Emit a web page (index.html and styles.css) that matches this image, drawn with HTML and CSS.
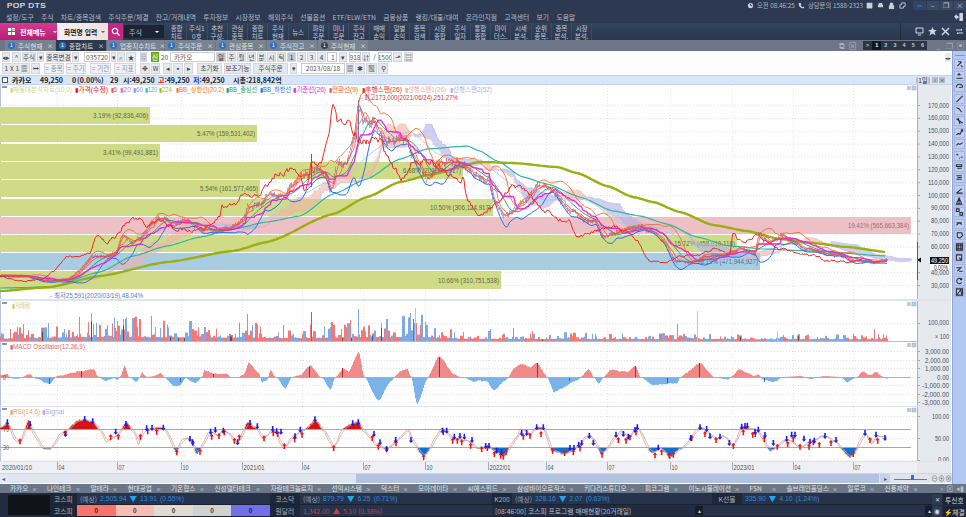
FILE: index.html
```html
<!DOCTYPE html>
<html lang="ko">
<head>
<meta charset="utf-8">
<title>POP DTS</title>
<link rel="stylesheet" href="styles.css">
</head>
<body>
<div class="app">
  <header class="titlebar">
    <div class="logo">POP DTS</div>
    <div class="title-right">
      <svg class="ico" viewBox="0 0 8 8"><circle cx="4" cy="4" r="3" fill="#c8d0dc"/><path d="M4 2v2h2" stroke="#2d3a50" fill="none"/></svg>
      <span class="clock">오전 08:46:25</span>
      <svg class="ico" viewBox="0 0 8 8"><path d="M1 1l2 0 1 2-1 1 2 2 1-1 1 1v1c-4 1-7-3-6-6z" fill="#c8d0dc"/></svg>
      <span class="phone">상담문의 1588-2323</span>
      <svg class="ico" viewBox="0 0 8 8"><path d="M1 1h6v6H1zM1 3h6M1 5h6" stroke="#c8d0dc" fill="#c8d0dc" stroke-width=".5"/></svg>
      <svg class="ico" viewBox="0 0 8 8"><path d="M2 1h4v2h1v3H1V3h1z" fill="#c8d0dc"/></svg>
      <svg class="ico" viewBox="0 0 8 8"><path d="M2 4V2.500a2 2 0 0 1 4 0V4h1v4H1V4z" fill="#c8d0dc"/></svg>
      <svg class="ico" viewBox="0 0 8 8"><path d="M3 1h4v4H5v2H1V3h2z" fill="none" stroke="#c8d0dc"/></svg>
      <div class="winbtns">
        <span class="winbtn blue">&lt;&gt;</span><span class="winbtn">–</span><span class="winbtn">❐</span><span class="winbtn">×</span>
      </div>
    </div>
  </header>
  <nav class="menubar">
    <span>설정/도구</span><span>주식</span><span>차트/종목검색</span><span>주식주문/체결</span><span>잔고/거래내역</span><span>투자정보</span><span>시장정보</span><span>해외주식</span><span>선물옵션</span><span>ETF/ELW/ETN</span><span>금융상품</span><span>랭킹/대출/대여</span><span>온라인지점</span><span>고객센터</span><span>보기</span><span>도움말</span>
    <svg class="menu-exit" viewBox="0 0 10 9"><path d="M6 0h4v9H6zM0 4l3-3v2h2v3H3v2z" fill="#d0d6e0"/></svg>
  </nav>
  <section class="toolbar">
    <div class="all-menu">
      <svg class="ico" viewBox="0 0 9 9"><path d="M0 0h4v4H0zM5 0h4v2H5zM5 3h4v1H5zM0 5h4v4H0zM5 5h4v4H5z" fill="#fff"/></svg>
      <b>전체메뉴</b><i class="caret-w"></i>
    </div>
    <div class="screen-input"><b>화면명 입력</b><i class="caret-r"></i></div>
    <div class="search-btn"><svg viewBox="0 0 9 9"><circle cx="4" cy="4" r="2.700" fill="none" stroke="#fff" stroke-width="1.200"/><path d="M6 6l2.500 2.500" stroke="#fff" stroke-width="1.300"/></svg></div>
    <div class="market-combo"><span>주식</span><i class="caret-w"></i></div>
    <div class="quick">
      <span>종합<br>차트</span><span>주식1<br>0호</span><span>추천<br>구성.</span><span>관심<br>종목</span><span>종합<br>차트</span><span>주식<br>현재</span><span>뉴스</span><span>파워<br>주문</span><span>미니<br>주문</span><span>주식<br>잔고</span><span>매매<br>손익</span><span>일별<br>손익</span><span>종목<br>검색</span><span>시장<br>종합</span><span>주식<br>일자</span><span>통합<br>종합</span><span>마이<br>더스.</span><span>시세<br>분석.</span><span>순위<br>종목.</span><span>종목<br>분석.</span><span>시장<br>분석.</span>
    </div>
    <div class="tool-right">
      <svg class="ico9" viewBox="0 0 9 9"><path d="M1 1h7v5H1zM3 8h3" fill="none" stroke="#cfd6e2"/></svg>
      <svg class="ico9" viewBox="0 0 9 9"><path d="M4.500 0l1.300 3h3L6.500 5l1 3.500-3-2-3 2 1-3.500L0 3h3.200z" fill="#cfd6e2"/></svg>
      <svg class="ico9" viewBox="0 0 9 9"><path d="M1 1l7 7M8 1L1 8" stroke="#cfd6e2" stroke-width="1.500"/></svg>
      <svg class="ico9 last" viewBox="0 0 9 9"><path d="M1 3h6l-1-1M8 6H2l1 1" fill="none" stroke="#cfd6e2"/></svg>
    </div>
  </section>
  <section class="tabs">
    <div class="tab"><i class="dot">1</i><span>주식현재</span><em>×</em></div>
    <div class="tab active"><i class="dot">1</i><span>종합차트</span><em>×</em></div>
    <div class="tab wide"><i class="dot">1</i><span>업종지수차트</span><em>×</em></div>
    <div class="tab"><i class="dot">1</i><span>주식주문</span><em>×</em></div>
    <div class="tab"><i class="dot">1</i><span>관심종목</span><em>×</em></div>
    <div class="tab"><i class="dot">1</i><span>주식잔고</span><em>×</em></div>
    <div class="tab"><i class="dot dark">1</i><span>주식현재</span><em>×</em></div>
    <div class="tabs-right">
      <span class="tab-ic">⧉</span><span class="tab-ic">⊠</span>
      <div class="pager"><b>&gt;</b><b class="cur">1</b><b>2</b><b>3</b><b>4</b><b>5</b><b>6</b></div>
      <span class="tab-ic">_</span><span class="tab-ic">❐</span><span class="tab-ic">▣</span>
    </div>
  </section>
  <div class="workspace">
    <div class="chart-col">
      <div class="row row1">
        <span class="c w8">◂▸</span><span class="c w9 ml1">^</span><span class="c w14">주식</span><span class="c w7">▾</span><span class="c w25 ml1">종목변경</span><span class="c w7">▾</span><span class="f w26 ml4">035720</span><span class="c w5">▾</span><span class="c w8">⌕</span><span class="c w10">★</span><span class="c w7 ml3 mute">뮤</span><span class="c w8 ml3 green">신</span><span class="p w5 ml2">20</span><span class="f w45 ml2 left">카카오</span><span class="c w10 dark">일</span><span class="c w9">주</span><span class="c w9">월</span><span class="c w9">년</span><span class="c w9">분</span><span class="c w9">시</span><span class="c w9">틱</span><span class="c w9 dark">1</span><span class="c w9">2</span><span class="c w9">3</span><span class="c w9">4</span><span class="f w10 left">1</span><span class="c w8 ml1">▾</span><span class="f w12 ml1">918</span><span class="c w8">⇵</span><span class="p w3 ml2">/</span><span class="f w14 ml1">1500</span><span class="c w9">⬏</span><span class="c w9 ml1">▤</span>
        <span class="collapse">◂▸</span>
      </div>
      <div class="row row2">
        <span class="c w28">1 X 1 ▦</span><span class="c w9">↦</span><span class="c w20 ml3 soft">= 종목</span><span class="c w20 ml1 soft">= 주기</span><span class="c w21 ml3 soft">= 기간</span><span class="c w22 ml2 soft">= 지표</span><span class="c w10 ml3">✥</span><span class="c w9">W</span><span class="c w9 ml2">◂</span><span class="c w10">▪</span><span class="c w9">▸</span><span class="c w25 ml3">초기화</span><span class="c w27 ml1">보조기능</span><span class="c w35 ml1">주식주문</span><span class="c w7 ml1">▾</span><span class="f w44 ml3">2023/08/18</span><span class="c w8">▦</span><span class="c w10">✱</span><span class="c w11">▧</span><span class="c w10">⚲</span>
      </div>
      <div class="infobar">
        <span class="check"></span>
        <b class="name">카카오</b><b class="n1">49,250</b><b class="n2">0</b><b class="n3">(0.00%)</b><b class="n4">29</b>
        <b class="n5">시:49,250</b><b class="n6"><u class="red">고</u>:49,250</b><b class="n7"><u class="blue">저</u>:49,250</b><b class="n8">시총:218,842억</b>
        <span class="info-btns"><span class="bx">[1일]</span><span class="bk">▫</span><span class="bk">×</span></span>
      </div>
      <div class="panes">
        <svg id="pane-price" class="pane price" width="951" height="216" viewBox="0 86 951 216"></svg>
        <svg id="pane-vol" class="pane vol" width="951" height="41" viewBox="0 302 951 41"></svg>
        <svg id="pane-macd" class="pane macd" width="951" height="65" viewBox="0 343 951 65"></svg>
        <svg id="pane-rsi" class="pane rsi" width="951" height="55" viewBox="0 408 951 55"></svg>
        <svg id="pane-time" class="pane time" width="951" height="11" viewBox="0 463 951 11"></svg>
      </div>
      <div class="scrollbar">
        <span class="sb-arrow">◂</span><span class="sb-gap"></span><span class="sb-thumb"></span>
        <span class="sb-end">▸</span>
        <span class="sb-slider"><i></i></span>
        <span class="sb-zoom">⊖</span><span class="sb-zoom">⊕</span><span class="sb-zoom">⊗</span>
      </div>
    </div>
    <aside class="rail" id="rail"></aside>
  </div>
  <section class="stocks">
    <span class="s3">카카오</span><span class="s4">나인테크</span><span class="s3">알테라</span><span class="s4">현대공업</span><span class="s4">기온협스</span><span class="s6">신성델타테크</span><span class="s7">자람테크놀로지</span><span class="s5">선익시스템</span><span class="s3">덕스터</span><span class="s5">모아데이타</span><span class="s5">씨에스윈드</span><span class="s8">삼성바이오로직스</span><span class="s7">키다리스튜디오</span><span class="s4">피코그램</span><span class="s7">이노시뮬레이션</span><span class="s3">FSN</span><span class="s7">솔브레인홀딩스</span><span class="s3">알루코</span><span class="s4">신풍제약</span>
    <div class="stocks-right"><span>»</span><span>⊠</span><span>◂▮</span></div>
  </section>
  <footer class="status">
    <div class="blackbox"></div>
    <div class="status-rows">
      <div class="srow">
        <span class="lbl l27">코스피</span>
        <span class="val v193">(예상) <q>2,505.94</q> <a>▼</a> <q>13.91</q> <q>(0.55%)</q></span>
        <span class="lbl l30">코스닥</span>
        <span class="val v192">(예상) <q>879.79</q> <a>▼</a> <q>6.25</q> <q>(0.71%)</q></span>
        <span class="lbl l20">K200</span>
        <span class="val v200">(예상) <q>328.16</q> <a>▼</a> <q>2.07</q> <q>(0.63%)</q></span>
        <span class="lbl l30">K선물</span>
        <span class="val grow"><q>335.90</q> <a>▼</a> <q>4.10</q> <q>(1.24%)</q></span>
      </div>
      <div class="srow">
        <span class="lbl l27">코스피</span>
        <div class="cells"><span class="c1">0</span><span class="c2">0</span><span class="c3">0</span><span class="c4">0</span><span class="c5">0</span></div>
        <span class="lbl l30">원달러</span>
        <span class="val v192 up">1,342.00 <a>▲</a> 5.10 (0.38%)</span>
        <span class="val v214 prog">[08:46:00] 코스피 프로그램 매매현황(20거래일)</span>
        <span class="mini">▴</span>
        <span class="val grow"></span>
        <span class="mini">▴</span>
      </div>
    </div>
    <div class="status-btns">
      <span class="sq">✕</span><span class="sbtn">투신호</span>
      <span class="sq">◉</span><span class="sbtn">⚡체결</span>
    </div>
  </footer>
</div>
<script src="chart.js"></script>
</body>
</html>
```
FILE: styles.css
```css
*{box-sizing:border-box}
html,body{margin:0;padding:0;overflow:hidden;background:#fff}
body{font:6.6px "Noto Sans CJK KR","Liberation Sans",sans-serif;color:#333}
.app{width:966px;height:517px;display:flex;flex-direction:column;overflow:hidden}

.titlebar{height:11px;background:#2c3950;display:flex;align-items:center;justify-content:space-between;padding-left:7px;color:#c8d0dc;overflow:hidden}
.logo{font:normal 8px "Liberation Sans",sans-serif;color:#e8ecf2;letter-spacing:.6px;-webkit-text-stroke:.2px #e8ecf2;line-height:11px}
.title-right{display:flex;align-items:center;height:11px;white-space:nowrap}
.ico{width:7px;height:7px;margin-right:3px;flex:none}
.clock{width:41px;flex:none;color:#aeb8c8;line-height:11px;font-size:6.300px}
.phone{width:58px;flex:none;color:#aeb8c8;line-height:11px;font-size:6.300px}
.title-right .ico:nth-of-type(n+3){margin-right:4px;width:7px}
.winbtns{display:flex;margin-left:2px}
.winbtn{width:13.500px;height:9px;line-height:9px;text-align:center;background:#3a4a64;color:#c8d0dc;font-size:7px;border-left:1px solid #2c3950;overflow:hidden}
.winbtn.blue{background:#2f4466;color:#7f93b3;font-size:5px}

.menubar{height:12px;background:#2c3950;display:flex;align-items:center;gap:7.300px;padding-left:6px;color:#b3bccb;position:relative}
.menubar span{white-space:nowrap;font-size:6.800px;line-height:11px}
.menu-exit{width:9px;height:8px;margin-left:auto;margin-right:3px}

.toolbar{height:17px;background:linear-gradient(#33435c,#2a374e);display:flex;align-items:stretch}
.all-menu{width:57px;background:linear-gradient(#d73a90,#b51f74);color:#fff;display:flex;align-items:center;padding-left:8px;gap:2px;font-size:7px;white-space:nowrap;flex:none}
.caret-w{width:0;height:0;border:2px solid transparent;border-top:2px solid #fff;margin:2px 0 0 5px;flex:none}
.caret-r{width:0;height:0;border:2px solid transparent;border-top:2px solid #c02a80;margin-top:2px;flex:none}
.screen-input{width:51px;background:linear-gradient(90deg,#fbeef2,#ece2da);color:#222;display:flex;align-items:center;justify-content:space-between;padding:0 3px 0 7px;font-size:6.800px;white-space:nowrap;flex:none}
.search-btn{width:15px;background:#c4277f;display:flex;align-items:center;justify-content:center;flex:none}
.search-btn svg{width:9px;height:9px}
.market-combo{width:40px;margin:2px 3px 2px 1px;background:#1c2433;color:#b9c2d0;display:flex;align-items:center;justify-content:space-between;padding:0 5px;font-size:7px;flex:none}
.quick{display:grid;grid-template-columns:repeat(21,20.250px);color:#c3cad6;line-height:8px;text-align:center;font-size:6.500px}
.quick span{display:flex;align-items:center;justify-content:center;border-right:1px solid #3c4b64;white-space:nowrap}
.tool-right{margin-left:auto;width:66px;display:flex;align-items:center;justify-content:flex-end;gap:4px;border-left:1px solid #1f2a3c;padding-right:2px}
.ico9{width:9px;height:9px}
.ico9.last{margin-left:1px}

.tabs{height:11px;background:#6c7686;display:flex;align-items:stretch;padding-left:5px;gap:1px;color:#dfe3ea}
.tab{width:50px;display:flex;align-items:center;background:#79838f;padding:0 2px 0 3px;gap:3px;white-space:nowrap}
.tab.active{background:#2c394e}
.tab.wide{width:57px}
.tab span{flex:1}
.tab em{font-style:normal;font-size:6px;color:#e6e9ee}
.dot{width:7px;height:7px;border-radius:50%;background:#2c6fc9;color:#fff;font:normal 5px/7px "Liberation Sans",sans-serif;text-align:center;flex:none}
.dot.dark{background:#3a3f48}
.tabs-right{margin-left:auto;display:flex;align-items:center;gap:2px;padding-right:1px;color:#a8b0bc}
.tab-ic{width:9px;text-align:center;font-size:8px;line-height:9px;overflow:hidden}
.pager{display:flex;background:#2c3544;height:9px;margin:0 5px 0 4px;width:64px;justify-content:space-around;font:bold 5.500px/9px "Liberation Sans",sans-serif;color:#bfc6d2}
.pager b{width:9px;text-align:center}
.pager .cur{background:#111822;color:#fff}

.workspace{height:433px;display:flex}
.chart-col{width:952px;display:flex;flex-direction:column;background:#fff}
.row{display:flex;align-items:center;gap:1px;padding-left:2px;position:relative;background:#fdfdff}
.row1{height:11px}
.row2{height:13px;padding-bottom:1px}
.c{height:10px;display:flex;align-items:center;justify-content:center;background:#e6e8ef;border:1px solid #d3d6df;color:#444;white-space:nowrap;font-size:6.500px;line-height:8px;overflow:hidden}
.row2 .c{height:11px}
.f{height:10px;display:flex;align-items:center;justify-content:center;background:#fff;border:1px solid #c6cad4;color:#555;overflow:hidden;white-space:nowrap;line-height:8px}
.row2 .f{height:11px}
.f.left{justify-content:flex-start;padding-left:3px}
.p{display:flex;justify-content:center;color:#555;line-height:8px}
.c.dark{background:#bfc4cf;color:#333}
.c.mute{background:#d6dae4;color:#9aa3b2}
.c.green{background:#7ab51d;color:#fff;border-color:#6ca015}
.c.soft{background:#f0f1f5;color:#8a8f9a}
.w3{width:3px}.w5{width:5px}.w7{width:7px}.w8{width:8px}.w9{width:9px}.w10{width:10px}.w11{width:11px}.w12{width:12px}.w14{width:14px}.w20{width:20px}.w21{width:21px}.w22{width:22px}.w25{width:25px}.w26{width:26px}.w27{width:27px}.w28{width:28px}.w35{width:35px}.w44{width:44px}.w45{width:45px}
.ml1{margin-left:1px}.ml2{margin-left:2px}.ml3{margin-left:3px}.ml4{margin-left:4px}
.collapse{position:absolute;right:1px;top:2px;width:6px;height:9px;background:#e8ebf2;font-size:5px;line-height:9px;text-align:center;color:#444;overflow:hidden}

.infobar{height:10px;background:#d8e6fc;border-top:1px solid #c4d2ec;border-bottom:1px solid #c4d2ec;display:flex;align-items:center;font:bold 7px/8px "Noto Sans CJK KR","Liberation Sans",sans-serif;color:#222;padding-left:2px;white-space:nowrap}
.infobar b{display:block;font-weight:700}
.infobar u{text-decoration:none}
.red{color:#e01818}.blue{color:#1838e0}
.check{width:6px;height:6px;border:1px solid #555;background:#fff;margin-right:4px;flex:none}
.name{width:28px}.n1{width:32px}.n2{width:5px}.n3{width:33px}.n4{width:13px}.n5{width:35px}.n6{width:35px}.n7{width:40px}.n8{width:60px}
.info-btns{margin-left:auto;display:flex;gap:1px;align-items:center;padding-right:7px;font:normal 6.500px/8px "Noto Sans CJK KR",sans-serif}
.bx{width:14px;text-align:center;margin-right:1px}
.bk{width:6px;height:6px;line-height:6px;background:#b8bdc8;text-align:center;font-size:5px;overflow:hidden}

.panes{display:flex;flex-direction:column}
.pane{display:block;flex:none}
.t{font:6.300px "Liberation Sans","Noto Sans CJK KR",sans-serif}

.scrollbar{height:10px;background:#dfe4ee;display:flex;align-items:center;font-size:6px;color:#3a5a90;border-top:1px solid #d0d6e2}
.sb-arrow{width:8px;text-align:center;background:#e2e8f4;height:9px;line-height:9px}
.sb-gap{width:348px;height:9px}
.sb-thumb{width:524px;height:9px;background:#b4c2e2}
.sb-end{width:10px;height:9px;line-height:9px;text-align:center;background:#c8d2e6;margin-left:1px}
.sb-slider{width:33px;height:3px;border-bottom:1px solid #707888;margin:0 4px;position:relative}
.sb-slider i{position:absolute;left:17px;top:-2px;width:3px;height:5px;background:#2a70d8}
.sb-zoom{width:7px;font-size:7px;line-height:9px;color:#6e7a6e;text-align:center;overflow:hidden}

.rail{width:14px;background:#b4c8f4;border-left:1px solid #8ea6d8;padding-top:4px;display:flex;flex-direction:column;align-items:center;gap:1.400px}
.rail svg{width:11px;height:10px;background:#c0cfee;border:1px solid #a4b6dc;flex:none}
.rail .sep{width:10px;height:1px;background:#7f93bf;margin-bottom:2px;flex:none}

.stocks{height:9px;background:#6c7686;display:flex;align-items:center;color:#dfe3ea;position:relative;padding-left:10px;white-space:nowrap;line-height:9px}
.stocks span{display:flex;justify-content:space-between;flex:none;padding-right:0;position:relative}
.stocks>span::after{content:"×";font-size:5px;color:#dfe3ea;position:absolute;right:10px;top:0}
.s3{width:37px}.s4{width:43.500px}.s5{width:49.500px}.s6{width:56px}.s7{width:61px}.s8{width:67px}
.stocks-right{position:absolute;right:0;top:0;height:9px;display:flex;gap:3px;align-items:center;padding-right:2px;background:#6c7686;color:#b8bfca}
.stocks-right span::after{content:none}

.status{height:24px;background:#222c40;display:flex;color:#9ea8b8}
.blackbox{width:42px;height:20px;margin:2px 0 2px 8px;background:#101418;flex:none}
.status-rows{flex:none;width:883px;display:flex;flex-direction:column}
.srow{height:12px;display:flex;align-items:stretch;border-bottom:1px solid #1a2232}
.lbl{display:flex;align-items:center;justify-content:center;background:#1e2738;color:#a8b0bc;flex:none;font-size:6.800px;line-height:10px}
.l20{width:20px}.l27{width:27px}.l30{width:30px}
.val{display:flex;align-items:center;gap:3px;background:#27334a;padding-left:3px;white-space:nowrap;flex:none;color:#8f9bb0;font-size:6.800px;line-height:10px}
.val q{quotes:none;color:#3488d8;font:6.800px/10px "Liberation Sans",sans-serif}
.val a{color:#22a4ee;font-size:7.500px}
.val.up,.val.up a{color:#d23a48}
.val.prog{color:#b4bcc8;background:#222c40}
.v192{width:192px}.v193{width:193px}.v200{width:200px}.v214{width:203px}
.grow{flex:1}
.cells{display:flex;width:193px;flex:none}
.cells span{flex:1;display:flex;align-items:center;justify-content:center;color:#444;font:bold 6.500px/10px "Liberation Sans",sans-serif}
.c1{background:#f8736c;color:#6a1a10!important}.c2{background:#fbbcb1}.c3{background:#e1dcd2}.c4{background:#d0d2cf}.c5{background:#7170e8;color:#201a80!important}
.mini{width:8px;background:#151c2a;color:#ccd;display:flex;align-items:center;justify-content:center;font-size:6px;flex:none;margin:1px 0;line-height:8px}
.status-btns{flex:1;display:grid;grid-template-columns:10px 1fr;grid-auto-rows:11px;gap:1px;padding-top:1px;color:#d4dae4;font-size:6.800px;line-height:10px;margin-left:-1px}
.sq{background:#2e3a50;display:flex;align-items:center;justify-content:center;font-size:6px}
.sbtn{background:#1b2434;display:flex;align-items:center;justify-content:center;white-space:nowrap}
```
FILE: chart.js
```js
(function () {
  var NS = 'http://www.w3.org/2000/svg';
  var seed = 20230818;
  function rnd() { seed = (Math.imul(seed, 1664525) + 1013904223) >>> 0; return seed / 4294967296; }
  function el(tag, attrs, parent, text) {
    var n = document.createElementNS(NS, tag);
    for (var k in attrs) n.setAttribute(k, attrs[k]);
    if (text !== undefined) n.textContent = text;
    if (parent) parent.appendChild(n);
    return n;
  }
  function interp(keys, x) {
    if (x <= keys[0][0]) return keys[0][1];
    for (var i = 1; i < keys.length; i++) {
      if (x <= keys[i][0]) {
        var a = keys[i - 1], b = keys[i];
        var t = (x - a[0]) / (b[0] - a[0]);
        t = t * t * (3 - 2 * t) * 0.5 + t * 0.5;
        return a[1] + (b[1] - a[1]) * t;
      }
    }
    return keys[keys.length - 1][1];
  }
  function label(svg, x, y, str, len, fill) {
    return el('text', { x: x, y: y, 'class': 't', fill: fill || '#444', textLength: len, lengthAdjust: 'spacingAndGlyphs' }, svg, str);
  }
  function poly(svg, pts, stroke, width, op) {
    var a = { points: pts.map(function (p) { return p[0] + ',' + p[1].toFixed(1); }).join(' '), fill: 'none', stroke: stroke, 'stroke-width': width, 'stroke-linejoin': 'round' };
    if (op) a.opacity = op;
    return el('polyline', a, svg);
  }
  function line(svg, x1, y1, x2, y2, stroke, w, dash) {
    var a = { x1: x1, y1: y1, x2: x2, y2: y2, stroke: stroke, 'stroke-width': w || 1 };
    if (dash) a['stroke-dasharray'] = dash;
    return el('line', a, svg);
  }
  var PLOT = 917, AX = 951;
  var TICKS = [57, 117, 181, 242, 302, 363, 425, 488, 546, 607, 670, 732, 793, 853];
  function frame(svg, top, bottom, ys) {
    el('rect', { x: 0, y: top, width: PLOT, height: bottom - top, fill: '#fff' }, svg);
    el('rect', { x: PLOT, y: top, width: AX - PLOT, height: bottom - top, fill: '#e6e9ee' }, svg);
    ys.forEach(function (y) {
      line(svg, 0, y + 0.5, PLOT, y + 0.5, '#dfdfe4', 1, '1 2');
      line(svg, PLOT, y + 0.5, PLOT + 3, y + 0.5, '#a4acba', 1);
    });
    TICKS.forEach(function (x) { line(svg, x + 0.5, top, x + 0.5, bottom, '#e6e6ea', 1, '1 2'); });
    line(svg, 0.5, top, 0.5, bottom, '#b8c4dc', 1);
    line(svg, PLOT + 0.5, top, PLOT + 0.5, bottom, '#aab2c0', 1);
  }
  function sep(svg, y, h, color) {
    el('rect', { x: 0, y: y, width: AX, height: h, fill: color || '#dfe3f0' }, svg);
  }
  function miniButtons(svg, y) {
    el('rect', { x: 907, y: y, width: 4, height: 4, fill: '#c4cad8' }, svg);
    el('rect', { x: 912, y: y, width: 4, height: 4, fill: '#b8cdf0', stroke: '#9ab', 'stroke-width': 0.5 }, svg);
    el('rect', { x: 2, y: y, width: 5, height: 2, fill: '#8a96ac' }, svg);
  }

  /* ---------- price series: keys describe the lagging span (price shifted 25px left) ---------- */
  var KEYS = [[-25, 277], [0, 277], [20, 282], [43, 280], [53, 273], [67, 257], [80, 258], [90, 253], [97, 235], [107, 243], [115, 238], [127, 223], [137, 218], [147, 228], [160, 220], [173, 230], [197, 232], [213, 225], [220, 217], [222, 208], [233, 207], [245, 195], [257, 198], [277, 175], [295, 170], [300, 178], [305, 193], [312, 163], [322, 162], [328, 140], [333, 106], [337, 123], [350, 125], [360, 143], [380, 140], [388, 160], [397, 173], [403, 180], [413, 162], [433, 163], [453, 178], [463, 180], [467, 200], [480, 218], [487, 212], [497, 203], [512, 187], [523, 188], [533, 200], [543, 213], [560, 220], [570, 223], [577, 238], [593, 233], [613, 228], [627, 233], [637, 243], [650, 263], [667, 263], [680, 257], [697, 257], [713, 250], [730, 255], [733, 235], [743, 243], [757, 237], [780, 250], [813, 257], [830, 262], [847, 263], [863, 261]];
  var N = 888, P = [], C = [], n = 0;
  for (var i = 0; i < N; i++) {
    var base = interp(KEYS, i - 25);
    var amp = 0.45 + Math.max(0, 290 - base) / 55;
    n = 0.55 * n + (rnd() - 0.5) * amp * 2.1;
    P.push(base + n);
    C.push({ hl: 0.5 + rnd() * amp * 1.1, up: rnd() > 0.48 });
  }
  P[N - 1] = 261;
  function sma(len) {
    return P.map(function (_, i) {
      var s = 0, c = 0;
      for (var j = Math.max(0, i - len + 1); j <= i; j++) { s += P[j]; c++; }
      return s / c;
    });
  }
  function mid(len) {
    return P.map(function (_, i) {
      var lo = 1e9, hi = -1e9;
      for (var j = Math.max(0, i - len + 1); j <= i; j++) { lo = Math.min(lo, P[j]); hi = Math.max(hi, P[j]); }
      return (lo + hi) / 2;
    });
  }
  function toPts(arr, shift) {
    return arr.map(function (v, i) { return [i + (shift || 0), v]; });
  }
  var ma5 = sma(5), ma20 = sma(20), ma60 = sma(60);
  var dev = P.map(function (_, i) {
    var s = 0, c = 0;
    for (var j = Math.max(0, i - 19); j <= i; j++) { s += (P[j] - ma20[i]) * (P[j] - ma20[i]); c++; }
    return Math.sqrt(s / c);
  });
  var tenkan = mid(9), kijun = mid(26), span2 = mid(52);
  var span1 = tenkan.map(function (v, i) { return (v + kijun[i]) / 2; });

  /* ---------- price pane ---------- */
  var sP = document.getElementById('pane-price');
  var yPrice = [];
  for (var k = 0; k <= 14; k++) yPrice.push(106 + k * 12.86);
  frame(sP, 86, 302, yPrice);
  var PROFILE = [
    [108, 125, 150, '3.19% (92,836,406)', '#cfdb87', '#5e6a3c'],
    [126, 143, 257, '5.47% (159,531,402)', '#cfdb87', '#5e6a3c'],
    [145, 162, 160, '3.41% (99,491,881)', '#cfdb87', '#5e6a3c'],
    [163, 180, 463, '6.88% (200,331,917)', '#cfdb87', '#5e6a3c'],
    [181, 198, 260, '5.54% (161,577,465)', '#cfdb87', '#5e6a3c'],
    [200, 217, 493, '10.50% (306,124,917)', '#cfdb87', '#5e6a3c'],
    [218, 235, 911, '19.41% (565,663,384)', '#ecc0c5', '#a86a70'],
    [236, 253, 737, '15.72% (458,010,118)', '#cfdb87', '#5e6a3c'],
    [254, 271, 760, '16.19% (471,944,927)', '#a9cde0', '#44708c'],
    [272, 290, 501, '10.66% (310,751,538)', '#cfdb87', '#5e6a3c']
  ];
  PROFILE.forEach(function (r) {
    el('rect', { x: 0, y: r[0], width: r[2], height: r[1] - r[0], fill: r[4] }, sP);
    var len = r[3].length * 3.05;
    label(sP, r[2] - len - 2, (r[0] + r[1]) / 2 + 2.5, r[3], len, r[5]);
  });
  // cloud
  for (var c = 0; c < N; c++) {
    var xc = c + 24;
    if (xc > 911) break;
    var a1 = span1[c], a2 = span2[c];
    line(sP, xc + 0.5, a1, xc + 0.5, a2, a1 < a2 ? '#f2b2a8' : '#b0b0e6', 1).setAttribute('opacity', 0.6);
  }
  poly(sP, toPts(span1, 24), '#f6bdb4', 0.6);
  poly(sP, toPts(span2, 24), '#bcbcea', 0.6);
  // long MAs
  var M120 = [[0, 289], [50, 288], [100, 273], [133, 257], [167, 247], [200, 238], [233, 230], [267, 223], [300, 217], [333, 195], [367, 180], [400, 160], [427, 150], [467, 147], [480, 152], [497, 162], [523, 178], [547, 185], [580, 198], [613, 212], [640, 217], [667, 225], [697, 238], [730, 247], [763, 250], [813, 252], [887, 257]];
  var M224 = [[0, 292], [50, 288], [100, 277], [167, 263], [233, 252], [267, 243], [333, 215], [367, 198], [400, 183], [433, 175], [480, 163], [513, 164], [557, 168], [577, 174], [607, 187], [633, 198], [653, 203], [680, 213], [713, 226], [747, 232], [780, 240], [813, 244], [847, 248], [887, 253]];
  function sampled(keys) {
    var r = [];
    for (var x = keys[0][0]; x <= keys[keys.length - 1][0]; x += 3) r.push([x, interp(keys, x)]);
    return r;
  }
  poly(sP, toPts(ma60), '#aac8ea', 0.9);
  poly(sP, sampled(M120), '#2fb7a0', 1.2);
  poly(sP, sampled(M224), '#9bae12', 2.4);
  // candles
  for (var q = 0; q < N; q++) {
    line(sP, q + 0.5, P[q] - C[q].hl, q + 0.5, P[q] + C[q].hl, C[q].up ? '#ee3a3a' : '#4f72c8', 0.7).setAttribute('opacity', 0.8);
  }
  line(sP, 311.5, 155, 311.5, 188, '#666', 1);
  line(sP, 358.5, 101, 358.5, 142, '#5b7fd0', 1);
  // bollinger
  poly(sP, P.map(function (_, i) { return [i, ma20[i] - 2 * dev[i]]; }), '#f0702a', 0.9);
  poly(sP, P.map(function (_, i) { return [i, ma20[i] + 2 * dev[i]]; }), '#2f70e8', 1);
  poly(sP, toPts(ma20), '#1f9f62', 0.9);
  poly(sP, toPts(kijun), '#f020e0', 1.3);
  poly(sP, toPts(tenkan), '#f25a30', 0.8);
  poly(sP, toPts(ma5), '#e84068', 0.7);
  // lagging span
  var lag = [];
  for (var g = 25; g < N; g++) lag.push([g - 25, P[g]]);
  poly(sP, lag, '#f22a2a', 1);
  // annotations
  label(sP, 358, 100.500, '←최고173,000(2021/06/24),251.27%', 100, '#e03030');
  label(sP, 48, 299, '←최저25,591(2020/03/19),48.04%', 95, '#4a7fd0');
  // legend
  var LEGEND = [
    [10, 62, '▮매물대분석차트(10,0)', '#cfd88f'], [75, 33, '▮가격(수정)', '#e01818'], [111, 6, '▮5', '#e8506e'], [120, 11, '▮20', '#c878e4'], [133, 10, '▮60', '#7ca4d8'], [145, 12, '▮120', '#32b8a6'], [159, 13, '▮224', '#a4b62a'], [176, 48, '▮BB_상한선(20,2)', '#f07a30'], [226, 31, '▮BB_중심선', '#1f9f62'], [260, 31, '▮BB_하한선', '#2f70e8'], [293, 33, '▮기준선(26)', '#f020e0'], [329, 29, '▮전환선(9)', '#f25a30'], [362, 40, '▮후행스팬(26)', '#f02a2a'], [405, 41, '▮선행스팬1(26)', '#f0a8a0'], [450, 42, '▮선행스팬2(52)', '#b4b0e4']
  ];
  LEGEND.forEach(function (l) { label(sP, l[0], 93, l[2], l[1], l[3]); });
  miniButtons(sP, 87);
  // price axis
  ['170,000', '160,000', '150,000', '140,000', '130,000', '120,000', '110,000', '100,000', '90,000', '80,000', '70,000', '60,000', '', '40,000', '30,000'].forEach(function (s, idx) {
    if (s) label(sP, 949 - s.length * 3, yPrice[idx] + 2.5, s, s.length * 3, '#4a5464');
  });
  // current price tag
  el('rect', { x: 917, y: 243, width: 1, height: 18, fill: '#e02020' }, sP);
  el('rect', { x: 917, y: 262, width: 1, height: 19, fill: '#2860d0' }, sP);
  el('polygon', { points: '917,261 921,258.500 921,263.500', fill: '#111' }, sP);
  el('rect', { x: 930, y: 258, width: 19, height: 7, fill: '#111' }, sP);
  el('rect', { x: 930, y: 265, width: 19, height: 6, fill: '#fff' }, sP);
  label(sP, 931, 264, '49,250', 17, '#fff');
  label(sP, 934, 270.500, '0.00%', 14, '#333');
  sep(sP, 300, 2);

  /* ---------- volume ---------- */
  var sV = document.getElementById('pane-vol');
  frame(sV, 302, 343, [324]);
  var ENV = [[0, 5], [30, 9], [100, 14], [180, 12], [300, 8], [350, 13], [420, 14], [450, 6], [520, 4.5], [680, 3.5], [888, 3.5]];
  var SPIKES = {
    23: [17, 0], 48: [18, 1], 79: [24, 0], 91: [28, 1], 117: [20, 1], 125: [22, 0], 151: [25, 0], 155: [14, 1], 247: [27, 0], 311: [29, 2], 358: [32, 1], 410: [28, 1], 415: [33, 3], 413: [22, 2],
    490: [12, 1], 513: [13, 0], 532: [10, 0], 677: [17, 0], 697: [30, 3], 777: [10, 3], 874: [12, 0]
  };
  var vh = 3, vk = 0, run = 0;
  for (var v = 0; v < N; v++) {
    var e = interp(ENV, v);
    if (run <= 0) {
      var r = rnd();
      vh = 1 + e * 0.22 + e * r * r * r * 1.7;
      vk = rnd() > 0.42 ? 0 : 1;
      run = 1 + Math.floor(rnd() * 2.4);
    }
    run--;
    var h = vh, kind = vk;
    if (SPIKES[v]) { h = SPIKES[v][0]; kind = SPIKES[v][1]; }
    var col = kind === 0 ? '#ee7a7a' : kind === 1 ? '#7ea9e4' : kind === 2 ? '#777' : '#f7b0b0';
    line(sV, v + 0.5, 342 - h, v + 0.5, 342, col, 1);
    if (rnd() > 0.985) line(sV, v + 0.5, 342 - h * 0.7, v + 0.5, 342, '#555', 1);
  }
  label(sV, 12, 309, '▮거래량', 18, '#c8c878');
  label(sV, 928, 326, '100,000', 21, '#4a5464');
  label(sV, 935, 340, '× 100', 14, '#4a5464');
  miniButtons(sV, 303);
  line(sV, 0, 342.500, PLOT, 342.500, '#b8bcc8', 1);

  /* ---------- MACD ---------- */
  var sM = document.getElementById('pane-macd');
  var yM = [352, 361, 369, 378, 386, 395, 403];
  frame(sM, 343, 408, yM);
  var MZ = [[0, 2], [20, 3], [30, -1], [50, -2], [90, 3], [100, -1], [148, -7], [170, 1], [240, 6], [280, 8], [290, 1], [315, -4], [340, -1], [350, -3], [360, 1], [372, 12], [385, 0], [410, -5], [425, 4], [440, 0], [460, 1], [480, 4], [495, -1], [520, -9], [540, -8], [555, -1], [585, -6], [605, 0], [612, 7], [640, 4], [680, 3], [690, 0], [710, -1], [730, 3], [745, 14], [775, 4], [785, -5], [800, -3], [810, 7], [825, 0], [855, -12], [875, 0], [900, 2], [930, 12], [960, 0], [990, -12], [1005, 0], [1030, 9], [1045, 6], [1075, 26], [1090, 1], [1135, -24], [1170, -4], [1200, 6], [1220, 9], [1232, 0], [1250, -28], [1280, -3], [1285, 1], [1315, 21], [1360, 3], [1380, 0], [1420, -4], [1440, -3]];
  var MZ2 = [[0, -5], [20, -4], [40, -14], [80, -2], [100, 9], [120, 13], [150, 10], [170, 14], [200, 0], [220, -15], [295, -3], [300, 0], [325, 8], [340, 0], [355, -7], [370, 0], [390, 7], [440, 5], [465, 11], [480, 0], [520, -8], [590, -6], [600, 0], [660, 14], [700, 0], [740, -3], [760, 2], [775, 8], [810, 3], [820, 1], [835, 3], [845, -2], [880, -5], [910, 0], [960, 1], [990, -2], [1030, 1], [1080, 0], [1100, -5], [1130, 0], [1145, 5], [1170, 2], [1185, 5], [1220, -2]];
  var MK = MZ.map(function (p) { return [p[0] / 3, p[1]]; }).concat(MZ2.map(function (p) { return [480 + p[0] / 3, p[1]]; }));
  var mD = 0;
  for (var m = 0; m < N; m++) {
    mD = 0.6 * mD + (rnd() - 0.5) * 1.1;
    var mv = interp(MK, m);
    mv = mv + mD * Math.min(1, Math.abs(mv) / 3);
    line(sM, m + 0.5, 378, m + 0.5, 378 - mv, mv >= 0 ? '#ee8a8a' : '#7ab2ea', 1);
  }
  [[49, -7], [81, 6], [180, -5], [213, 3], [309, 10], [342, 9], [439, 20], [537, 14], [569, -4], [635, 11], [667, -6], [699, 14], [764, -5]].forEach(function (d) {
    line(sM, d[0] + 0.5, 378, d[0] + 0.5, 378 - d[1], d[1] > 0 ? '#b02828' : '#2068c8', 1);
  });
  line(sM, 0, 378.500, 911, 378.500, '#a8acb4', 1);
  label(sM, 3, 380.500, '0', 3, '#555');
  label(sM, 10, 350, '▮MACD Oscillator(12,26,9)', 75, '#e06a6a');
  ['3,000.00', '2,000.00', '1,000.00', '0.00', '-1,000.00', '-2,000.00', '-3,000.00'].forEach(function (s, idx) {
    var L = s.length * 3;
    label(sM, 949 - L, yM[idx] + 2.5, s, L, '#4a5464');
  });
  miniButtons(sM, 344);
  sep(sM, 407, 1);

  /* ---------- RSI ---------- */
  var sR = document.getElementById('pane-rsi');
  frame(sR, 408, 463, [417, 439, 461]);
  var RZ = [[0, 400], [22, 385], [45, 440], [60, 445], [85, 375], [100, 420], [130, 465], [150, 465], [185, 415], [240, 378], [280, 385], [300, 410], [320, 445], [335, 430], [350, 425], [378, 385], [405, 420], [415, 455], [430, 405], [470, 400], [490, 400], [530, 475], [545, 435], [570, 435], [590, 480], [630, 410], [650, 425], [670, 410], [715, 445], [740, 385], [770, 405], [790, 435], [820, 405], [850, 465], [880, 425], [905, 410], [945, 378], [970, 410], [1000, 460], [1030, 400], [1075, 385], [1090, 410], [1130, 455], [1160, 465], [1190, 440], [1225, 405], [1235, 440], [1270, 490], [1325, 402], [1360, 435], [1400, 440], [1440, 465]];
  var RZ2 = [[20, 460], [70, 485], [110, 430], [120, 405], [150, 420], [170, 400], [190, 405], [215, 470], [250, 480], [280, 465], [330, 420], [365, 480], [405, 430], [425, 410], [445, 430], [470, 400], [515, 480], [540, 460], [570, 490], [600, 465], [660, 400], [710, 435], [730, 425], [760, 455], [785, 398], [830, 410], [870, 470], [920, 435], [960, 460], [1000, 440], [1030, 425], [1060, 440], [1110, 492], [1155, 415], [1175, 450], [1190, 425], [1220, 430]];
  var RK = RZ.map(function (p) { return [p[0] / 3, 295 + p[1] / 3]; }).concat(RZ2.map(function (p) { return [480 + p[0] / 3, 295 + p[1] / 3]; }));
  var R = [], S = [], rn = 0, sg = 0;
  for (var t = 0; t < N; t++) {
    rn = 0.6 * rn + (rnd() - 0.5) * 1.4;
    R.push(interp(RK, t) + rn);
    sg = t ? sg + (R[t] - sg) * 0.35 : R[t];
    S.push(sg);
  }
  for (var f = 0; f < N; f++) {
    if (R[f] < 430) line(sR, f + 0.5, R[f], f + 0.5, 430, '#d81212', 1);
    if (R[f] > 448) line(sR, f + 0.5, 448, f + 0.5, R[f], '#1070d0', 1);
  }
  line(sR, 0, 430.500, 911, 430.500, '#a8a8a8', 1);
  line(sR, 0, 448.500, 911, 448.500, '#a8a8a8', 1);
  poly(sR, toPts(S), '#b0a8f0', 0.8);
  poly(sR, toPts(R), '#f0a060', 0.8);
  function arrow(x, y, dir) {
    var tip = y - 3 * dir, end = y + 3 * dir, base = y - 0.5 * dir;
    return [[x, tip], [x + 2.2, base], [x + 0.8, base], [x + 0.8, end], [x - 0.8, end], [x - 0.8, base], [x - 2.2, base]].map(function (p) { return p.join(','); }).join(' ');
  }
  var BLUE1 = [[22, 385], [90, 390], [197, 420], [254, 375], [278, 382], [347, 413], [378, 390], [440, 403], [456, 402], [490, 401], [570, 435], [578, 445], [632, 413], [646, 408], [670, 410], [713, 445], [750, 387], [772, 397], [818, 405], [830, 412], [843, 413], [885, 427], [901, 407], [945, 376], [1058, 388], [1075, 385], [1122, 420], [1140, 445], [1160, 465], [1187, 438], [1233, 438], [1328, 410], [1340, 410], [1363, 428], [1380, 426], [1393, 428], [1416, 438]];
  var RED1 = [[60, 442], [195, 418], [332, 430], [355, 428], [421, 428], [443, 412], [470, 413], [530, 475], [578, 447], [600, 473], [635, 428], [657, 426], [673, 415], [703, 440], [718, 430], [792, 433], [820, 418], [833, 420], [853, 456], [884, 436], [906, 422], [1001, 462], [1117, 432], [1135, 458], [1160, 466], [1188, 448], [1271, 490], [1330, 415], [1358, 440], [1372, 440], [1385, 445], [1412, 455]];
  var BLUE2 = [[17, 456], [27, 456], [50, 470], [65, 474], [125, 417], [140, 417], [170, 400], [190, 400], [270, 462], [282, 462], [296, 452], [305, 447], [328, 426], [340, 446], [408, 422], [430, 420], [445, 428], [465, 408], [472, 400], [535, 461], [632, 432], [660, 400], [680, 405], [690, 427], [720, 428], [748, 447], [785, 398], [795, 396], [802, 395], [825, 413], [835, 407], [855, 423], [880, 447], [920, 435], [935, 422], [945, 422], [972, 434], [990, 443], [1003, 440], [1035, 426], [1068, 438], [1155, 417], [1188, 422], [1215, 432]];
  var RED2 = [[5, 465], [22, 462], [43, 480], [62, 485], [70, 488], [78, 475], [130, 428], [150, 425], [183, 420], [218, 470], [254, 477], [280, 475], [300, 463], [366, 482], [415, 438], [438, 440], [450, 430], [468, 415], [525, 484], [545, 475], [568, 485], [580, 482], [635, 432], [675, 420], [708, 438], [760, 456], [790, 415], [818, 422], [826, 420], [853, 435], [892, 458], [923, 450], [940, 435], [960, 458], [987, 458], [1000, 445], [1018, 452], [1053, 447], [1120, 480], [1170, 438], [1193, 440]];
  function arrows(list, ox, fill, dir) {
    list.forEach(function (a) {
      el('polygon', { points: arrow(ox + a[0] / 3, 295 + a[1] / 3, dir), fill: fill }, sR);
    });
  }
  arrows(RED1, 0, '#ef1414', 1);
  arrows(RED2, 480, '#ef1414', 1);
  arrows(BLUE1, 0, '#1420e8', -1);
  arrows(BLUE2, 480, '#1420e8', -1);
  label(sR, 3, 433, '70', 6, '#555');
  label(sR, 3, 451, '30', 6, '#555');
  label(sR, 10, 415, '▮RSI(14,6)', 30, '#f0a060');
  label(sR, 42, 415, '▮Signal', 22, '#b0a8f0');
  label(sR, 932, 419.500, '100.00', 17, '#4a5464');
  label(sR, 935, 441.500, '50.00', 14, '#4a5464');
  label(sR, 938, 463, '0.00', 11, '#4a5464');
  miniButtons(sR, 409);
  sep(sR, 462, 1);

  /* ---------- time axis ---------- */
  var sT = document.getElementById('pane-time');
  el('rect', { x: 0, y: 463, width: 951, height: 11, fill: '#eef0f5' }, sT);
  el('rect', { x: PLOT, y: 463, width: 34, height: 11, fill: '#e6e9ee' }, sT);
  var TL = ['04', '07', '10', '2021/01', '04', '07', '10', '2022/01', '04', '07', '10', '2023/01', '04', '07'];
  label(sT, 2, 471, '2020/01/10', 30, '#4a5464');
  TICKS.forEach(function (x, idx) {
    line(sT, x + 0.5, 463, x + 0.5, 471, '#a4acba', 1);
    label(sT, x + 1.500, 471, TL[idx], TL[idx].length * 3, '#4a5464');
  });

  /* ---------- tool rail ---------- */
  var rail = document.getElementById('rail');
  var ICONS = [
    'M2 7L7 2M3 2h3v1M6 6l2 2', 'M4 1v3M2 3h4M1 7h7', 'M1 5a3.500 3.500 0 0 1 7 0M4 5h3', 'M1 8L8 1', 'M1 2l3 1 3 4', 'M1 2l7 5M3 1l2 7',
    'M1 7l2-2 2 1 2-4M6 1h2v2', 'M1 6l2-2 2 1 3-2', 'M2 2v2M1 3h2M6 6h2M4 7h1', 'M1 2h6v2H1zM2 6h5', 'M1 2h6M2 4h5M1 6h6', 'M1 8l6-5M1 8h7',
    'M4 1L1 8h6zM4 1v7', 'M1 1h3v3H1zM5 5h3v3H5z', 'M1 6l3-3 3 2M1 3h6', 'M2 2h5l1 3-3 3-3-1z', 'M1 1h7v7H1zM3 1v7M6 1v7M1 3h7M1 6h7', 'M1 1h6v6H1zM4 4l3 3', 'M2 7l5-5M1 3h4M4 7h4', 'M7 3a3 3 0 1 0 0 3M7 1v2H5', 'M1 1h7v7H1zM2 7l4-5 1 5'
  ];
  var s0 = document.createElement('div'); s0.className = 'sep'; rail.appendChild(s0);
  ICONS.forEach(function (d) {
    var s = el('svg', { viewBox: '0 0 9 9' }, rail);
    el('path', { d: d, fill: 'none', stroke: '#2a2a34', 'stroke-width': 1.2 }, s);
  });
})();
```
